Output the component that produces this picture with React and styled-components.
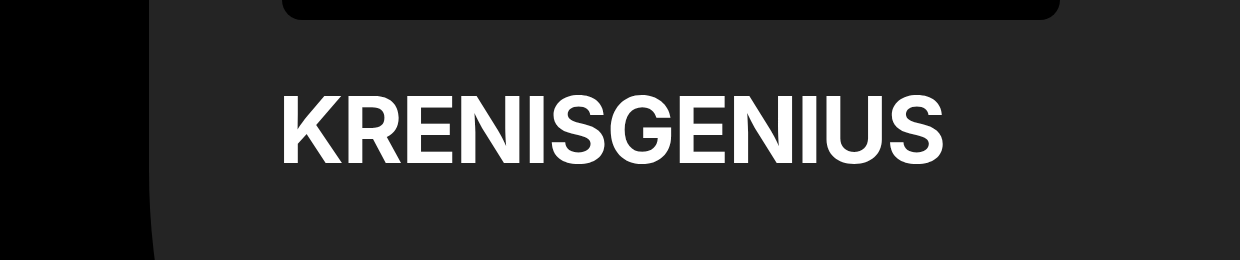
import styled, { createGlobalStyle } from "styled-components";

const GlobalStyle = createGlobalStyle`
    html, body {
        margin: 0;
        background: #000;
        overflow: hidden;
    }
    body {
        font-family: Inter, "Noto Sans", sans-serif;
    }
`;

const App = () => {
    return (
        <>
            <GlobalStyle />
            <Page>
                <Card>
                    <Cover />
                    <Title>KRENISGENIUS</Title>
                </Card>
            </Page>
        </>
    );
};

const Page = styled.div`
    display: flex;
    height: 260px;
    padding-left: 149px;
    overflow: hidden;
`;

const Card = styled.div`
    flex: 1;
    height: 380px;
    padding-left: 133px;
    background-color: #242424;
    border-bottom-left-radius: 60px 210px;
`;

const Cover = styled.div`
    width: 778px;
    height: 20px;
    background-color: #000;
    border-radius: 0 0 28px 28px;
`;

const Title = styled.h1`
    margin: 64px 0 0 -4px;
    font-size: 92px;
    font-weight: 700;
    line-height: 1;
    letter-spacing: -1.7px;
    color: #fff;
`;

export default App;
